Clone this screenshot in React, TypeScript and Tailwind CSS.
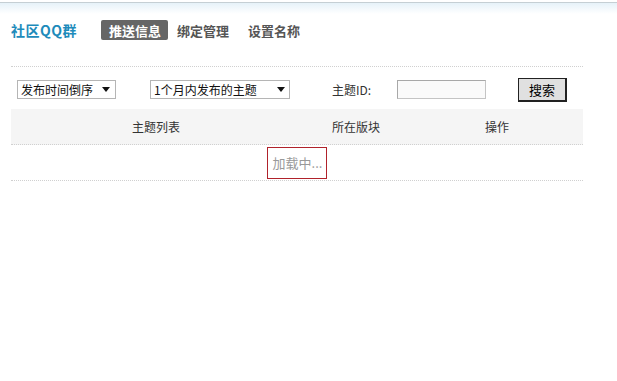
const font = '"Noto Sans CJK SC", "Liberation Sans", sans-serif';

function FakeSelect({ label, width, arrowGap }: { label: string; width: string; arrowGap: string }) {
  return (
    <div
      className={`${width} h-[19px] flex items-center justify-between border border-[#b5b5b5] bg-white pl-[3px] ${arrowGap} text-[12px] text-[#111] leading-none`}
    >
      <span>{label}</span>
      <span className="w-0 h-0 border-l-[4px] border-r-[4px] border-t-[5px] border-l-transparent border-r-transparent border-t-[#111]" />
    </div>
  );
}

export default function App() {
  return (
    <div className="w-[617px] h-[381px] bg-white overflow-hidden" style={{ fontFamily: font }}>
      <div className="h-[14px] bg-[linear-gradient(to_bottom,#ffffff_0px,#ffffff_2px,#c5cfd4_2px,#c5cfd4_3px,#e6f2f9_3px,#ffffff_14px)]" />

      <div className="ml-[11px] w-[572px]">
        <div className="mt-[6px] h-[20px] flex items-center">
          <span className="text-[14px] font-bold text-[#1d8bbb] leading-none tracking-[0.5px]">社区QQ群</span>
          <span className="ml-[24px] h-[20px] flex items-center pl-[8px] pr-[7px] rounded-[2px] bg-[#666666] text-white text-[13px] font-bold leading-none">
            推送信息
          </span>
          <span className="ml-[9px] text-[13px] font-bold text-[#555555] leading-none">绑定管理</span>
          <span className="ml-[19px] text-[13px] font-bold text-[#555555] leading-none">设置名称</span>
        </div>

        <div className="mt-[26px] border-t border-dotted border-[#d0d0d0]" />

        <div className="mt-[10px] h-[25px] flex items-center">
          <div className="ml-[6px]">
            <FakeSelect label="发布时间倒序" width="w-[99px]" arrowGap="pr-[5px]" />
          </div>
          <div className="ml-[34px]">
            <FakeSelect label="1个月内发布的主题" width="w-[140px]" arrowGap="pr-[4px]" />
          </div>
          <span className="ml-[42px] text-[12px] text-[#333333] leading-none">主题ID:</span>
          <div className="ml-[26px] w-[89px] h-[19px] border border-[#c4c4c4] border-t-[#a8a8a8] border-l-[#a8a8a8] bg-[#fafafa]" />
          <button className="ml-[32px] w-[49px] h-[24px] border border-[#222222] border-r-2 border-b-2 bg-[#e0e0e0] text-[13px] text-black leading-none">
            搜索
          </button>
        </div>

        <div className="mt-[7px] h-[36px] grid grid-cols-[290px_110px_172px] items-center bg-[#f5f5f5] text-[12px] text-[#333333] border-b border-dotted border-[#d0d0d0]">
          <span className="text-center">主题列表</span>
          <span className="text-center">所在版块</span>
          <span className="text-center">操作</span>
        </div>

        <div className="h-[36px] flex items-center justify-center border-b border-dotted border-[#d0d0d0]">
          <div className="h-[32px] flex items-center pl-[5px] pr-[4px] border border-[#b0222b] text-[13px] text-[#999999] leading-none">
            加载中...
          </div>
        </div>
      </div>
    </div>
  );
}
